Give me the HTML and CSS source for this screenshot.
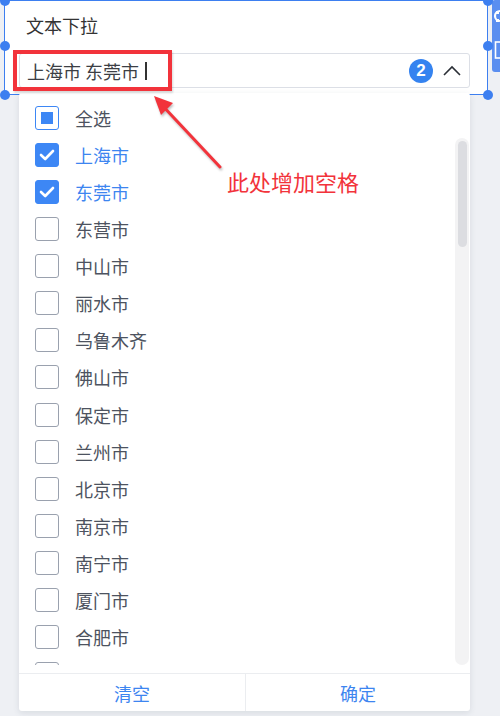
FILE: index.html
```html
<!DOCTYPE html>
<html lang="zh">
<head>
<meta charset="utf-8">
<title>文本下拉</title>
<link rel="stylesheet" href="styles.css">
</head>
<body>
<div class="side-tools">
  <svg class="side-icons" width="8" height="72" viewBox="0 0 8 72">
    <circle cx="8" cy="16" r="5" fill="none" stroke="#fff" stroke-width="2.2"/>
    <rect x="4" y="11" width="3" height="3" fill="#fff"/>
    <rect x="4" y="19" width="3" height="3" fill="#fff"/>
    <rect x="3.5" y="42" width="8" height="16" fill="none" stroke="#fff" stroke-width="1.6"/>
  </svg>
</div>

<div class="widget">
  <span class="handle h-tl"></span>
  <span class="handle h-tr"></span>
  <span class="handle h-ml"></span>
  <span class="handle h-mr"></span>
  <span class="handle h-bl"></span>
  <span class="handle h-br"></span>
  <div class="title">文本下拉</div>
  <div class="input">
    <span class="input-text">上海市 东莞市</span><span class="caret"></span>
    <span class="badge">2</span>
    <svg class="chevron" width="18" height="11" viewBox="0 0 18 11"><path d="M1 10 L9 2 L17 10" fill="none" stroke="#2b2f36" stroke-width="1.6"/></svg>
  </div>
</div>

<div class="dropdown">
  <div class="list-wrap">
    <ul class="list">
      <li class="item"><span class="cb cb-half"></span><span class="label">全选</span></li>
      <li class="item on"><span class="cb cb-on"><svg width="16" height="12" viewBox="0 0 16 12"><path d="M2 6 L6.2 10 L14 2" fill="none" stroke="#fff" stroke-width="2.6" stroke-linecap="round" stroke-linejoin="round"/></svg></span><span class="label">上海市</span></li>
      <li class="item on"><span class="cb cb-on"><svg width="16" height="12" viewBox="0 0 16 12"><path d="M2 6 L6.2 10 L14 2" fill="none" stroke="#fff" stroke-width="2.6" stroke-linecap="round" stroke-linejoin="round"/></svg></span><span class="label">东莞市</span></li>
      <li class="item"><span class="cb"></span><span class="label">东营市</span></li>
      <li class="item"><span class="cb"></span><span class="label">中山市</span></li>
      <li class="item"><span class="cb"></span><span class="label">丽水市</span></li>
      <li class="item"><span class="cb"></span><span class="label">乌鲁木齐</span></li>
      <li class="item"><span class="cb"></span><span class="label">佛山市</span></li>
      <li class="item"><span class="cb"></span><span class="label">保定市</span></li>
      <li class="item"><span class="cb"></span><span class="label">兰州市</span></li>
      <li class="item"><span class="cb"></span><span class="label">北京市</span></li>
      <li class="item"><span class="cb"></span><span class="label">南京市</span></li>
      <li class="item"><span class="cb"></span><span class="label">南宁市</span></li>
      <li class="item"><span class="cb"></span><span class="label">厦门市</span></li>
      <li class="item"><span class="cb"></span><span class="label">合肥市</span></li>
      <li class="item"><span class="cb"></span></li>
    </ul>
    <div class="scroll-track"><div class="scroll-thumb"></div></div>
  </div>
  <div class="footer">
    <button class="btn">清空</button>
    <button class="btn btn-right">确定</button>
  </div>
</div>

<div class="highlight"></div>
<svg class="arrow" width="500" height="716" viewBox="0 0 500 716">
  <line x1="220" y1="167" x2="160" y2="103" stroke="#f2333b" stroke-width="3" stroke-linecap="round"/>
  <polygon points="154,96 173,103 161,115" fill="#f2333b"/>
</svg>
<div class="note">此处增加空格</div>
</body>
</html>
```

FILE: styles.css
```css
* { box-sizing: border-box; }

body {
  margin: 0;
  width: 500px;
  height: 716px;
  overflow: hidden;
  position: relative;
  background: #eef0f4;
  font-family: "Noto Sans CJK SC", "Noto Sans", sans-serif;
}

.side-tools {
  position: absolute;
  right: 0;
  top: 0;
  width: 8px;
  height: 72px;
  background: #5a8ef0;
  border-radius: 3px 0 0 3px;
}
.side-icons { display: block; }

.widget {
  position: relative;
  margin-left: 4px;
  width: 484px;
  height: 95px;
  background: #fff;
  border: 1px solid #3d7ff0;
}

.handle {
  position: absolute;
  width: 10px;
  height: 10px;
  border-radius: 50%;
  background: #3d7ff0;
}
.h-tl { left: -5.5px; top: -5.5px; }
.h-tr { right: -5.5px; top: -5.5px; }
.h-ml { left: -5.5px; top: 40px; }
.h-mr { right: -5.5px; top: 40px; }
.h-bl { left: -5.5px; bottom: -5.5px; }
.h-br { right: -5.5px; bottom: -5.5px; }

.title {
  padding: 14px 0 0 21px;
  font-size: 18px;
  line-height: 20px;
  color: #333;
}

.input {
  margin: 18px 0 0 14px;
  width: 451px;
  height: 35px;
  border: 1px solid #dcdfe6;
  border-radius: 3px;
  display: flex;
  align-items: center;
  padding: 0 8px 0 7px;
}
.input-text {
  font-size: 18px;
  color: #3c3f45;
  white-space: pre;
}
.caret {
  width: 1.5px;
  height: 18px;
  background: #333;
  margin-left: 6px;
  margin-right: auto;
}
.badge {
  width: 24px;
  height: 24px;
  border-radius: 50%;
  background: #3583f0;
  color: #fff;
  font-family: "Liberation Sans", "Noto Sans", sans-serif;
  font-weight: bold;
  font-size: 17px;
  line-height: 24px;
  text-align: center;
  margin-right: 10px;
}
.chevron { display: block; }

.dropdown {
  position: relative;
  margin: -2px 0 0 19px;
  width: 451px;
  height: 618px;
  background: #fff;
  border-radius: 3px;
  box-shadow: 0 2px 6px rgba(60, 70, 90, 0.12);
  display: flex;
  flex-direction: column;
}

.list-wrap {
  position: relative;
  height: 572px;
  overflow: hidden;
  margin-bottom: 8px;
  padding-top: 6px;
}
.list {
  list-style: none;
  margin: 0;
  padding: 0;
}
.item {
  height: 37.14px;
  display: flex;
  align-items: center;
  padding-left: 16px;
  font-size: 18px;
  color: #4d5360;
}
.item.on .label { color: #3d85f0; }
.cb {
  width: 24px;
  height: 24px;
  border: 1.5px solid #9aa1ae;
  border-radius: 3px;
  margin-right: 16px;
  display: flex;
  align-items: center;
  justify-content: center;
  flex-shrink: 0;
}
.cb-on {
  background: #3d87f5;
  border-color: #3d87f5;
}
.cb-half {
  border-color: #3d87f5;
}
.cb-half::after {
  content: "";
  width: 12px;
  height: 12px;
  background: #3d87f5;
}

.scroll-track {
  position: absolute;
  right: 1px;
  top: 45px;
  bottom: 0;
  width: 14px;
  background: #f3f3f4;
  border-radius: 7px;
}
.scroll-thumb {
  margin: 3px auto 0;
  width: 9px;
  height: 106px;
  background: #dcdde1;
  border-radius: 5px;
}

.footer {
  height: 38px;
  border-top: 1px solid #ebedf0;
  display: grid;
  grid-template-columns: 226px 1fr;
}
.btn {
  border: 0;
  background: transparent;
  font-family: inherit;
  font-size: 18px;
  color: #3d85f0;
  padding: 0;
}
.btn-right { border-left: 1px solid #ebedf0; }

.highlight {
  position: absolute;
  left: 13px;
  top: 50px;
  width: 159px;
  height: 41px;
  border: 4px solid #f2333b;
  box-shadow: 1px 2px 2px rgba(0, 0, 0, 0.15);
}
.arrow {
  position: absolute;
  left: 0;
  top: 0;
  pointer-events: none;
  filter: drop-shadow(1px 2px 1px rgba(0, 0, 0, 0.25));
}
.note {
  position: absolute;
  left: 227px;
  top: 168px;
  font-size: 22px;
  line-height: 26px;
  color: #f2333b;
}
```
